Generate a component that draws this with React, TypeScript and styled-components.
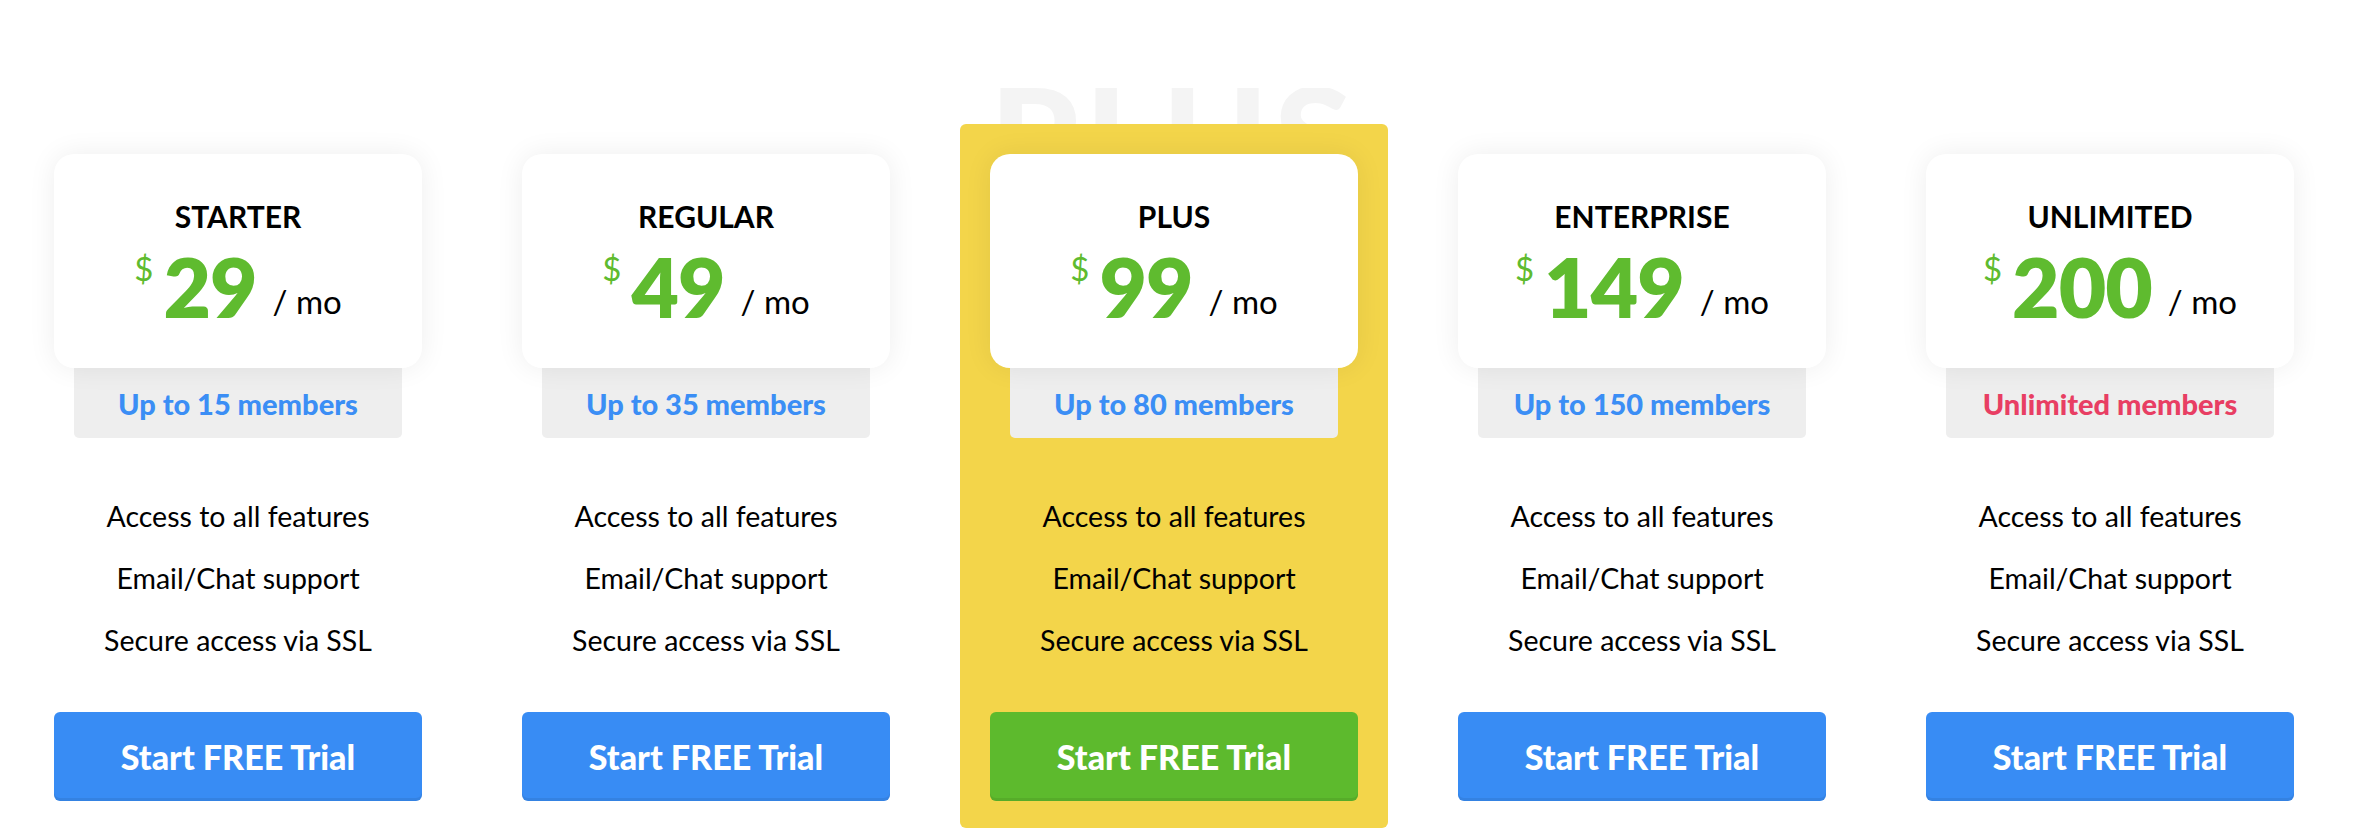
import React from "react";
import styled, { createGlobalStyle } from "styled-components";

const GlobalStyle = createGlobalStyle`
  html {
    background: #ffffff;
  }
  body {
    margin: 0;
    padding: 0;
    font-family: Lato, "Open Sans", Arial, sans-serif;
    overflow: hidden;
  }
  * { box-sizing: border-box; }
`;

type Plan = {
  name: string;
  price: number;
  members: string;
  unlimited?: boolean;
  featured?: boolean;
};

const plans: Plan[] = [
  { name: "STARTER", price: 29, members: "Up to 15 members" },
  { name: "REGULAR", price: 49, members: "Up to 35 members" },
  { name: "PLUS", price: 99, members: "Up to 80 members", featured: true },
  { name: "ENTERPRISE", price: 149, members: "Up to 150 members" },
  { name: "UNLIMITED", price: 200, members: "Unlimited members", unlimited: true },
];

const features = ["Access to all features", "Email/Chat support", "Secure access via SSL"];

const Pricing = styled.section`
  display: flex;
  gap: 40px;
  padding: 124px 0 0 24px;
  width: 2366px;
  height: 828px;
`;

const Column = styled.div<{ $featured?: boolean }>`
  position: relative;
  width: 428px;
  height: 704px;
  padding: 30px 30px 27px;
  display: flex;
  flex-direction: column;
  align-items: center;
  border-radius: 6px;
  background: ${(p) => (p.$featured ? "#f3d54a" : "transparent")};
`;

const GhostClip = styled.div`
  position: absolute;
  top: -36px;
  left: 0;
  right: 0;
  height: 36px;
  overflow: hidden;
  pointer-events: none;
`;

const GhostText = styled.div`
  text-align: center;
  font-size: 142px;
  font-weight: 900;
  line-height: 36px;
  margin-top: 29px;
  letter-spacing: 6px;
  color: #f4f4f4;
  user-select: none;
`;

const Card = styled.div`
  width: 368px;
  height: 214px;
  background: #ffffff;
  border-radius: 20px;
  box-shadow: 0 0 28px rgba(0, 0, 0, 0.07);
  display: flex;
  flex-direction: column;
  align-items: center;
  padding-top: 47px;
  position: relative;
  z-index: 1;
`;

const Title = styled.h3`
  margin: 0;
  font-size: 30px;
  line-height: 1;
  font-weight: 700;
  color: #000;
`;

const PriceRow = styled.div`
  display: flex;
  align-items: baseline;
  margin-top: 14px;
  line-height: 1;
`;

const Currency = styled.span`
  align-self: flex-start;
  font-size: 33px;
  font-weight: 400;
  color: #5fbb2f;
  margin-right: 10px;
  margin-top: 7px;
`;

const Amount = styled.span`
  font-size: 82px;
  font-weight: 800;
  color: #5fbb2f;
  letter-spacing: -1px;
`;

const Period = styled.span`
  font-size: 33px;
  font-weight: 400;
  color: #000;
  margin-left: 16px;
  transform: translateY(-4px);
`;

const Members = styled.div<{ $unlimited?: boolean }>`
  width: 328px;
  height: 70px;
  background: #eeeeee;
  border-radius: 0 0 5px 5px;
  display: flex;
  align-items: center;
  justify-content: center;
  font-size: 29px;
  font-weight: 900;
  color: ${(p) => (p.$unlimited ? "#e83e63" : "#3b8ef5")};
`;

const FeatureList = styled.ul`
  list-style: none;
  margin: 47px 0 0;
  padding: 0;
  text-align: center;
`;

const Feature = styled.li`
  font-size: 28.5px;
  line-height: 62px;
  color: #000;
`;

const TrialButton = styled.button<{ $featured?: boolean }>`
  margin-top: auto;
  width: 368px;
  height: 89px;
  border: none;
  border-radius: 6px;
  background: ${(p) => (p.$featured ? "#5dba2d" : "#388cf4")};
  box-shadow: inset 0 -3px 0 rgba(0, 0, 0, 0.07);
  color: #ffffff;
  font-family: inherit;
  font-size: 34px;
  font-weight: 900;
  cursor: pointer;
`;

export default function App() {
  return (
    <>
      <GlobalStyle />
      <Pricing>
        {plans.map((plan) => (
          <Column key={plan.name} $featured={plan.featured}>
            {plan.featured && (
              <GhostClip aria-hidden>
                <GhostText>PLUS</GhostText>
              </GhostClip>
            )}
            <Card>
              <Title>{plan.name}</Title>
              <PriceRow>
                <Currency>$</Currency>
                <Amount>{plan.price}</Amount>
                <Period>/ mo</Period>
              </PriceRow>
            </Card>
            <Members $unlimited={plan.unlimited}>{plan.members}</Members>
            <FeatureList>
              {features.map((f) => (
                <Feature key={f}>{f}</Feature>
              ))}
            </FeatureList>
            <TrialButton $featured={plan.featured}>Start FREE Trial</TrialButton>
          </Column>
        ))}
      </Pricing>
    </>
  );
}
